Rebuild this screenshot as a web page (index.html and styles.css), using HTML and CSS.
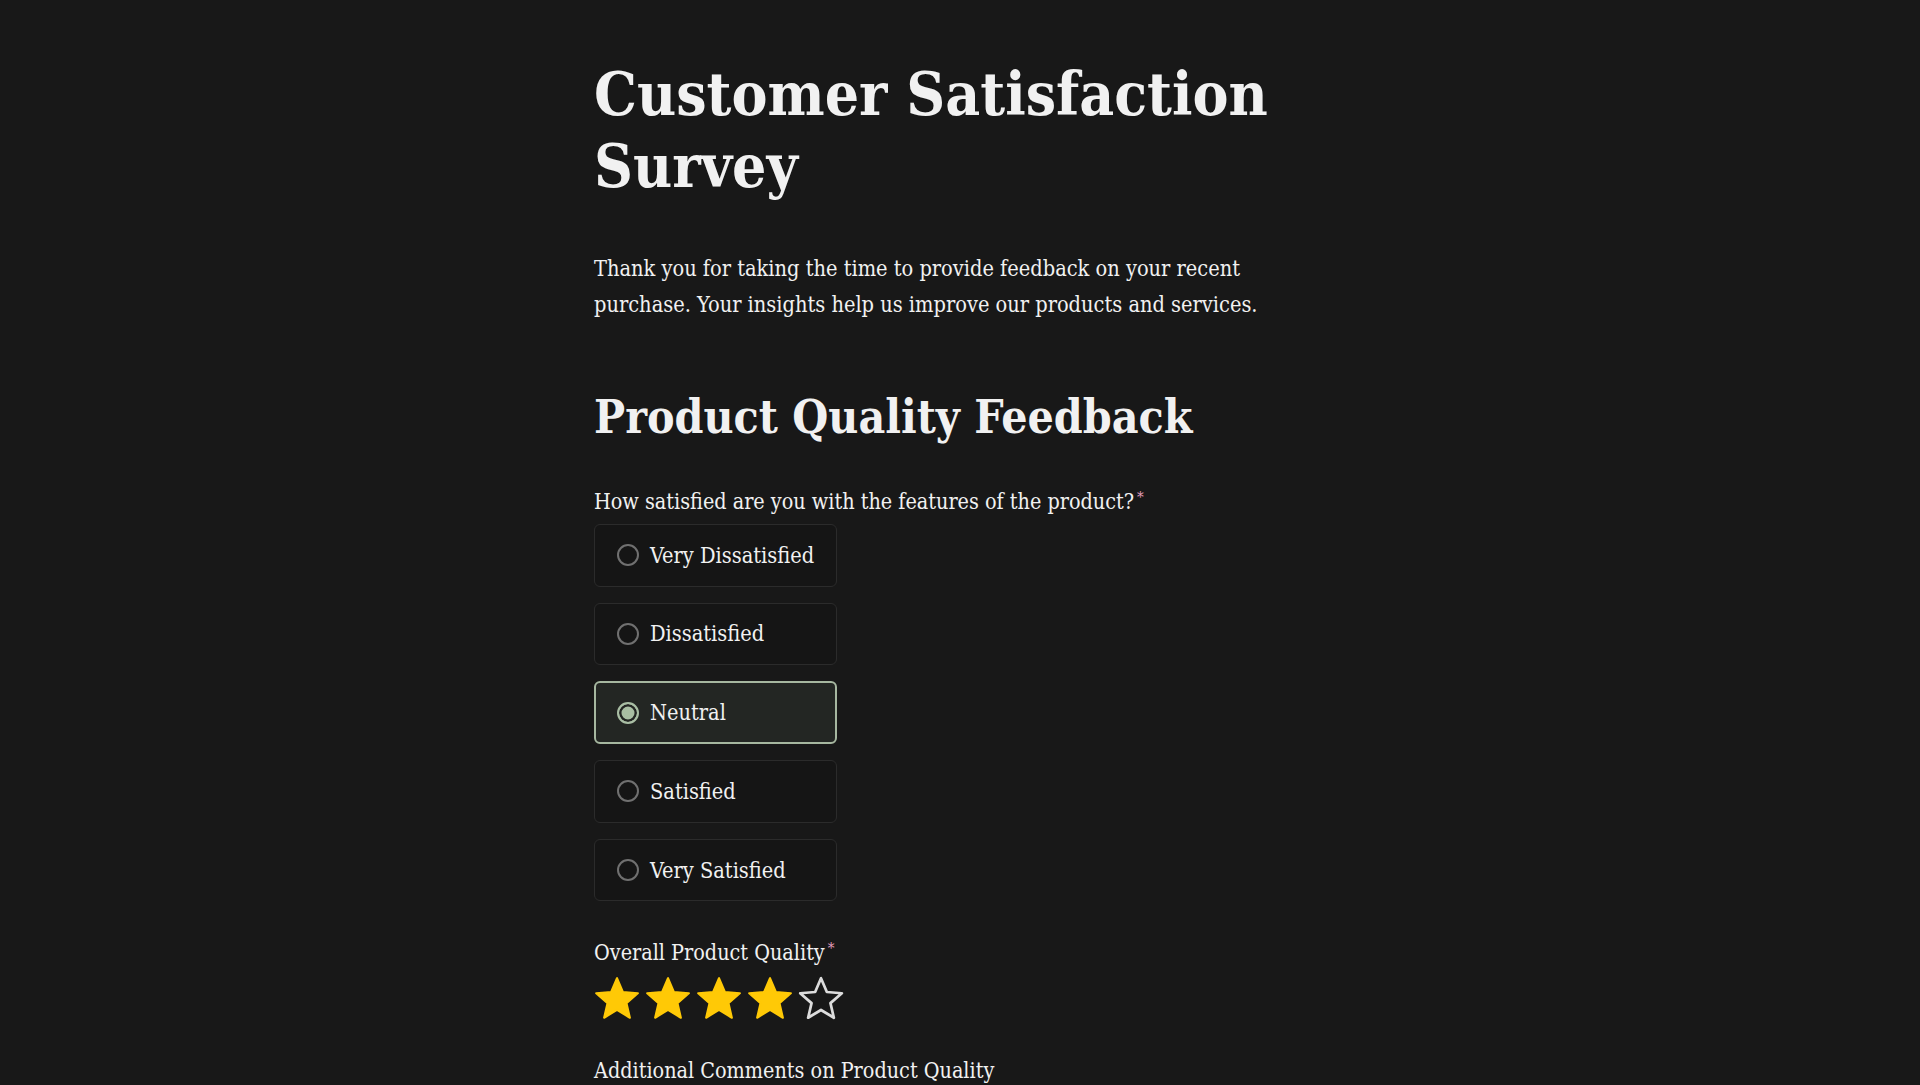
FILE: index.html
```html
<!DOCTYPE html>
<html lang="en">
<head>
<meta charset="utf-8">
<title>Customer Satisfaction Survey</title>
<link rel="stylesheet" href="styles.css">
</head>
<body>
<main class="survey">
  <h1 class="title">Customer Satisfaction Survey</h1>
  <p class="intro">Thank you for taking the time to provide feedback on your recent purchase. Your insights help us improve our products and services.</p>

  <section class="section">
    <h2 class="section-title">Product Quality Feedback</h2>

    <div class="field first">
      <div class="label">How satisfied are you with the features of the product?<span class="req">*</span></div>
      <div class="options">
        <label class="option"><span class="radio"></span><span class="option-text">Very Dissatisfied</span></label>
        <label class="option"><span class="radio"></span><span class="option-text">Dissatisfied</span></label>
        <label class="option selected"><span class="radio"></span><span class="option-text">Neutral</span></label>
        <label class="option"><span class="radio"></span><span class="option-text">Satisfied</span></label>
        <label class="option"><span class="radio"></span><span class="option-text">Very Satisfied</span></label>
      </div>
    </div>

    <div class="field">
      <div class="label">Overall Product Quality<span class="req">*</span></div>
      <div class="stars">
        <svg class="star filled" viewBox="0 0 24 24"><path d="M12 17.27L18.18 21l-1.64-7.03L22 9.24l-7.19-.61L12 2 9.19 8.63 2 9.24l5.46 4.73L5.82 21z"/></svg>
        <svg class="star filled" viewBox="0 0 24 24"><path d="M12 17.27L18.18 21l-1.64-7.03L22 9.24l-7.19-.61L12 2 9.19 8.63 2 9.24l5.46 4.73L5.82 21z"/></svg>
        <svg class="star filled" viewBox="0 0 24 24"><path d="M12 17.27L18.18 21l-1.64-7.03L22 9.24l-7.19-.61L12 2 9.19 8.63 2 9.24l5.46 4.73L5.82 21z"/></svg>
        <svg class="star filled" viewBox="0 0 24 24"><path d="M12 17.27L18.18 21l-1.64-7.03L22 9.24l-7.19-.61L12 2 9.19 8.63 2 9.24l5.46 4.73L5.82 21z"/></svg>
        <svg class="star empty" viewBox="0 0 24 24"><path d="M12 17.27L18.18 21l-1.64-7.03L22 9.24l-7.19-.61L12 2 9.19 8.63 2 9.24l5.46 4.73L5.82 21z"/></svg>
      </div>
    </div>

    <div class="field">
      <div class="label">Additional Comments on Product Quality</div>
      <textarea class="comments" rows="4"></textarea>
    </div>
  </section>
</main>
</body>
</html>
```

FILE: styles.css
```css
html, body {
  margin: 0;
  padding: 0;
  background: #181818;
}

body {
  color: #f1f1f1;
  font-family: "DejaVu Serif Condensed", "DejaVu Serif", serif;
  font-stretch: condensed;
}

.survey {
  width: 732px;
  margin: 0 auto;
  padding-top: 58px;
}

.title {
  margin: 0;
  font-size: 60px;
  line-height: 72px;
  font-weight: 700;
}

.intro {
  margin: 49px 0 0;
  font-size: 21.6px;
  line-height: 35.5px;
}

.section {
  margin-top: 67px;
}

.section-title {
  margin: 0;
  font-size: 46px;
  line-height: 56px;
  font-weight: 700;
}

.field {
  margin-top: 33px;
}

.field.first {
  margin-top: 38px;
}

.label {
  font-size: 21.4px;
  line-height: 28px;
  margin-bottom: 8px;
}

.req {
  color: #e39cbc;
  font-size: 15px;
  vertical-align: 7px;
  margin-left: 3px;
}

.options {
  display: inline-grid;
  grid-auto-rows: 62.5px;
  row-gap: 16.2px;
}

.option {
  display: flex;
  align-items: center;
  gap: 11px;
  padding: 0 22px;
  border: 1px solid #2b2b2b;
  border-radius: 6px;
  background: #151515;
  font-size: 21.6px;
}

.radio {
  width: 22px;
  height: 22px;
  box-sizing: border-box;
  border: 2px solid #707070;
  border-radius: 50%;
  flex: none;
}

.option.selected {
  border: 2px solid #a6b7a0;
  background: #232623;
  padding: 0 21px;
}

.option.selected .radio {
  border: 2px solid #a9bea4;
  background: #a9bfa3;
  box-shadow: inset 0 0 0 2.5px #232623;
}

.stars {
  display: flex;
  gap: 1px;
  margin-left: -2px;
  margin-top: -1px;
}

.star {
  width: 50px;
  height: 50px;
}

.star.filled path {
  fill: #ffc906;
  stroke: #ffc906;
  stroke-width: 1;
  stroke-linejoin: round;
}

.star.empty path {
  fill: none;
  stroke: #dcdcdc;
  stroke-width: 1.3;
  stroke-linejoin: round;
}

.comments {
  display: block;
  width: 100%;
  box-sizing: border-box;
  height: 120px;
  background: #151515;
  border: 1px solid #2b2b2b;
  border-radius: 6px;
  color: #f1f1f1;
}
```
